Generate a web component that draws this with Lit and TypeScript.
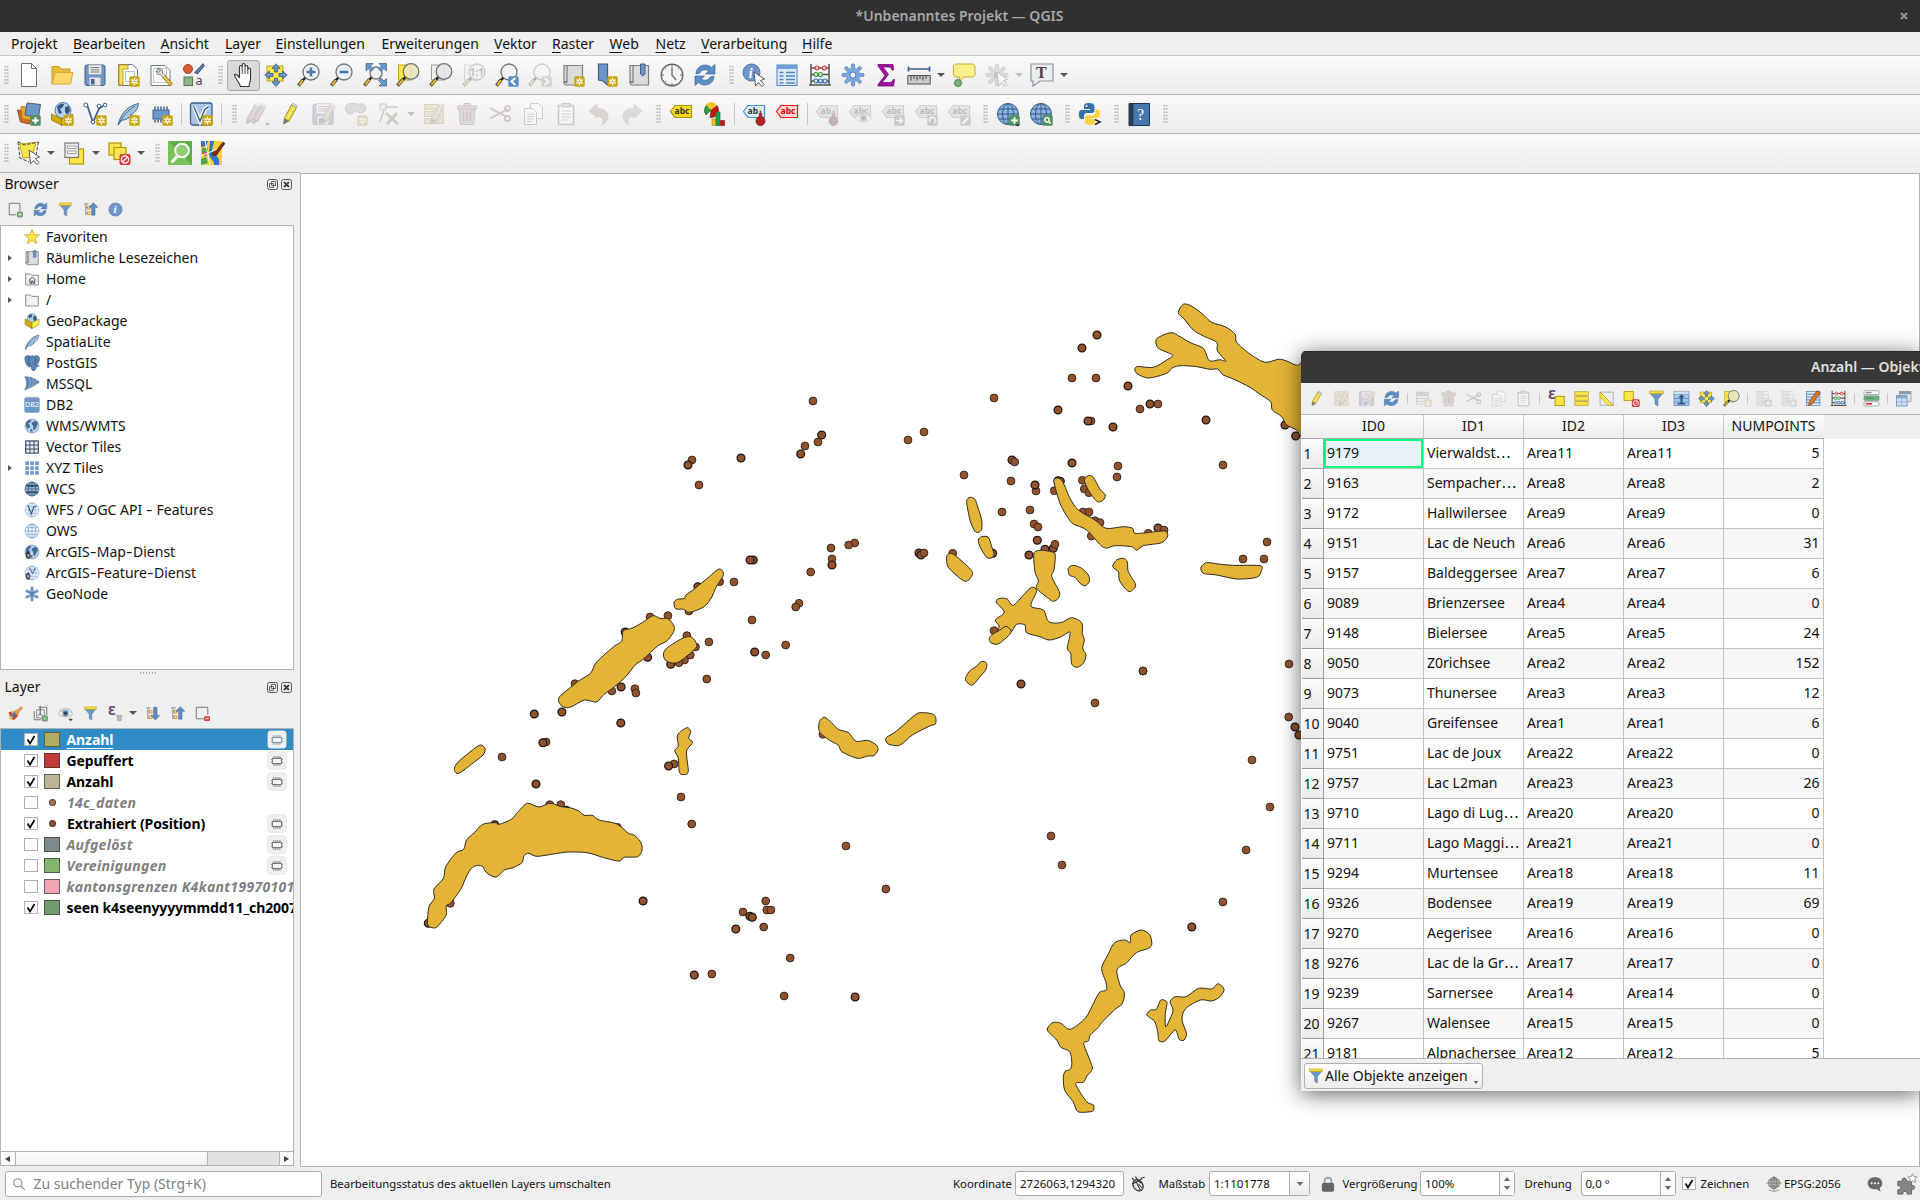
import { LitElement, html, svg, css, nothing, TemplateResult } from "lit";
import { customElement, property } from "lit/decorators.js";
import { classMap } from "lit/directives/class-map.js";

/* ---------- icon parts ---------- */

const B = "#6d97c8";
const BD = "#3f5f86";

const badge = (fill: string, inner: unknown) => svg`
  <rect x="13.3" y="13.3" width="10.4" height="10.4" rx="1.5" fill=${fill}/>${inner}`;
const star = badge("#c9a40c", svg`<path d="M18.5 14.8v7.4M15.3 16.6l6.4 3.8M21.7 16.6l-6.4 3.8" stroke="#fff" stroke-width="1.5"/><circle cx="18.5" cy="18.5" r="1" fill="#c9a40c"/>`);
const plus = badge("#4f8f5c", svg`<path d="M18.5 15.2v6.6M15.2 18.5h6.6" stroke="#fff" stroke-width="1.9"/>`);
const lens = (cx: number, cy: number, r: number, fill = "#eef2f3") => svg`
  <path d="M${cx - r * 0.7} ${cy + r * 0.7}L${cx - r * 0.7 - 3} ${cy + r * 0.7 + 3}" stroke="#222" stroke-width="2.6"/>
  <path d="M${cx - r * 0.7 - 2.5} ${cy + r * 0.7 + 2.5}L1.5 22.5" stroke="#333" stroke-width="3.4"/>
  <path d="M${cx - r * 0.7 - 2.5} ${cy + r * 0.7 + 2.5}L2.2 21.8" stroke="#f0c02c" stroke-width="2"/>
  <circle cx=${cx} cy=${cy} r=${r} fill=${fill} fill-opacity=".88" stroke="#6e7478" stroke-width="1.3"/>`;
const page = (x: number, y: number, w: number, h: number) => svg`
  <path d="M${x} ${y}h${w - 5}l5 5v${h - 5}h${-w}z" fill="#fff" stroke="#6f6f6f"/><path d="M${x + w - 5} ${y}v5h5" fill="none" stroke="#6f6f6f"/>`;
const globe = (fill: string, line: string) => svg`
  <circle cx="12" cy="12" r="10.5" fill=${fill} stroke=${line}/>
  <path d="M1.5 12h21M3.2 7h17.6M3.2 17h17.6M12 1.5v21" stroke=${line} fill="none"/>
  <ellipse cx="12" cy="12" rx="5.5" ry="10.5" fill="none" stroke=${line}/>`;
const earth = svg`
  <circle cx="12" cy="12" r="10.5" fill="#b9d0ea" stroke="#6b8fb8"/>
  <path d="M3 8c2-4 6-6 8-5l-2 4-3 1 3 3-1 4-3 1-2-4zM13 6l5-2 3 4-2 5-3 5-2-1v-5l-3-3zM9 18l3-2 1 4-3 1z" fill="#45688f"/>`;
const pencil = (c: string, dx = 0) => svg`
  <path d="M${5.5 + dx} 22l1-6L${13.5 + dx} 3l5 2.7L${11 + dx} 19z" fill=${c} stroke="#8a7a1e" stroke-width=".8"/>
  <path d="M${6.5 + dx} 16l4.5 3-5.5 3z" fill="#777"/><path d="M${13.5 + dx} 3l1.4-1.8 4.7 2.6-1.1 1.9z" fill="#ddd" stroke="#999" stroke-width=".6"/>
  <path d="M${9 + dx} 17.2L${16 + dx} 5" stroke="#fff" stroke-opacity=".5"/>`;
const labelTag = (fill: string, line: string, txt: string, color: string) => svg`
  <path d="M1.5 9.500L6 3.500h16.500v12H6z" fill=${fill} stroke=${line} stroke-width="1.2"/>
  <text x="5.600" y="12.400" font-size="8.500" font-weight="700" fill=${color} font-family="Noto Sans, sans-serif">${txt}</text>`;
const folder = svg`<path d="M2.500 4.500h7l2 2h10v14.500h-19z" fill="#f2f2f2" stroke="#7c7c7c" stroke-width="1.300"/>`;
const disk = svg`
  <rect x="2" y="2" width="20" height="20.500" rx="2" fill="${B}" stroke="#45618a"/>
  <rect x="5.500" y="2" width="13" height="9.500" fill="#eee" stroke="#999" stroke-width=".6"/>
  <path d="M7.500 4.500h9M7.500 6.800h9M7.500 9h9" stroke="#777"/>
  <rect x="6.500" y="14.500" width="11" height="8" fill="#e6e6e6"/><rect x="8" y="16" width="3.500" height="5.500" fill="#4b6384"/>`;
const funnel = svg`
  <path d="M3 4.500h18L14 13v9.500l-4-2.500V13z" fill="${B}" stroke="#4d6f99" stroke-width=".8"/>
  <rect x="2.500" y="1.500" width="19" height="3.800" fill="#f6dc3c" stroke="#b59c14" stroke-width=".8"/>`;
const refresh = svg`
  <path d="M3 11C3 5 8 2 12 2c3 0 5 1 6.500 2.500L22 1.500v9.500h-9.500l3-3C13 5.800 8.500 6.500 7 10z" fill="#5b8cc4" stroke="#416a9b" stroke-width=".7"/>
  <path d="M21 13c0 6-5 9-9 9-3 0-5-1-6.500-2.500L2 22.500V13h9.500l-3 3c2.500 2.200 7 1.500 8.500-2z" fill="#5b8cc4" stroke="#416a9b" stroke-width=".7"/>`;
const cursor = svg`<path d="M12 9l1.500 14 3-3.500 3.500 4 2-2-3.500-4 4-1.500z" fill="#fff" stroke="#555"/>`;
const box3d = svg`
  <path d="M1.500 12L12 17v6.500L1.500 18z" fill="#d6ab06" stroke="#8b7008" stroke-width=".8"/>
  <path d="M22.500 12L12 17v6.500L22.500 18z" fill="#fdf14e" stroke="#8b7008" stroke-width=".8"/>`;
const trash = svg`
  <path d="M4 7h16l-1.500 15.500h-13z" fill="#d9a9a9" stroke="#a15a5a"/><path d="M2.500 4h19v3h-19zM9 4V1.500h6V4" fill="#d9a9a9" stroke="#a15a5a"/>
  <path d="M8.500 9.500v10M12 9.500v10M15.500 9.500v10" stroke="#a15a5a" stroke-width="1.500"/>`;
const gear = (c: string, line: string) => svg`
  ${[0, 45, 90, 135].map((a) => svg`<rect x="10.400" y="1" width="3.200" height="22" rx="1" fill=${c} stroke=${line} stroke-width=".7" transform="rotate(${a} 12 12)"/>`)}
  <circle cx="12" cy="12" r="7.200" fill=${c}/><circle cx="12" cy="12" r="3" fill="#f5f5f5" stroke=${line}/>`;
const abacus = svg`
  <path d="M3 1v21M21 1v21M3 5h18M3 11.500h18M3 18h18M1 22h22" stroke="#555" stroke-width="1.500"/>
  <g stroke-width="1.200"><g fill="#f7d5d5" stroke="#d33"><circle cx="9" cy="5" r="2"/><circle cx="16.500" cy="5" r="2"/></g>
  <g fill="#d5f0d5" stroke="#3a9a48"><circle cx="8" cy="11.500" r="2"/><circle cx="12.500" cy="11.500" r="2"/></g>
  <g fill="#d5e5f5" stroke="#3c70ad"><circle cx="8" cy="18" r="2"/><circle cx="12.500" cy="18" r="2"/><circle cx="17" cy="18" r="2"/></g></g>`;
const pages2 = svg`
  <path d="M9.500 1.500h8l4 4v11h-12z" fill="#fff" stroke="#777"/><path d="M3.500 6.500h8l4 4v12h-12z" fill="#fff" stroke="#777"/>
  <path d="M6 12h7M6 14.500h7M6 17h7M6 19.500h5" stroke="#888"/>`;
const clipboard = svg`
  <path d="M4.500 3.500h15v19h-15z" fill="#fff" stroke="#777" stroke-width="1.600"/><rect x="8" y="1.500" width="8" height="3.500" fill="#bbb" stroke="#777"/>
  <path d="M7.500 9h9M7.500 12h9M7.500 15h9M7.500 18h6" stroke="#888"/>`;
const scissors = svg`
  <path d="M2 6l17 9M2 16.500L20 7" stroke="#777" stroke-width="1.800"/>
  <circle cx="19.500" cy="6.500" r="2.600" fill="none" stroke="#a66" stroke-width="1.700"/><circle cx="19.500" cy="16.500" r="2.600" fill="none" stroke="#a66" stroke-width="1.700"/>`;
const rowsYellow = (c: string) => svg`
  <g fill=${c} stroke="#b59a10"><rect x="2.500" y="2.500" width="19" height="5"/><rect x="2.500" y="9.500" width="19" height="5"/><rect x="2.500" y="16.500" width="19" height="5"/></g>`;
const panArrows = svg`
  <rect x="3" y="3" width="16" height="15" fill="#fbe64a" stroke="#c2a30f"/>
  <path d="M12 .8l4 4.600h-2.500V9h-3V5.400H8zM12 23.500l4-4.600h-2.500v-3.600h-3v3.600H8zM.8 12l4.600-4v2.500H9v3H5.400V16zM23.200 12l-4.600-4v2.500H15v3h3.600V16z" fill="${B}" stroke="#33587f" stroke-width=".8"/>`;
const treeLines = svg`<path d="M2 3h7M4.500 3v18M4.500 9h4M4.500 18h4" stroke="#777" fill="none" stroke-width="1.300"/>
  <rect x="7" y="7" width="4" height="4" fill="#fff" stroke="#e8902a" stroke-width="1.600"/><rect x="7" y="16" width="4" height="4" fill="#fff" stroke="#e8902a" stroke-width="1.600"/>`;
const feather = svg`<path d="M2 23C4 14 10 4 22.500 1.500 22 8 17 12 14 13l1.500.5C12 17 9 18 6 18z" fill="#a8c4e4" stroke="#44678f"/><path d="M2 23C6 15 12 8 19 4" stroke="#44678f" fill="none"/>`;
const noSign = svg`<rect x="12.500" y="13" width="11" height="11" rx="2" fill="#d8383e"/><circle cx="18" cy="18.500" r="3.600" fill="none" stroke="#fff" stroke-width="1.300"/><path d="M15.500 21l5-5" stroke="#fff" stroke-width="1.300"/>`;
const eye = svg`<path d="M.5 12.500c5-8 18-8 23 0-5 6-18 6-23 0z" fill="#f3f3f3" stroke="#8c8c8c"/><path d="M2 8c5-5.500 15-5.500 20 0" fill="none" stroke="#999"/><circle cx="12" cy="11.500" r="4.800" fill="#5c86b5"/><circle cx="12" cy="11.500" r="2" fill="#222"/>`;
const tableGrid = svg`
  <rect x="2" y="2" width="20" height="20.500" fill="#dcebfa" stroke="#4d7fb8"/><rect x="2" y="2" width="20" height="4" fill="#6f9fd8"/>
  <path d="M4.500 9.500h4M11 9.500h9M4.500 13h4M11 13h9M4.500 16.500h4M11 16.500h9M4.500 20h4M11 20h9" stroke="#5485bd" stroke-width="1.400"/>`;
const elephant = svg`<path d="M1.500 3c2-2.500 6-2.500 8-1 2-1 4-1 5 0 3-1.500 7-1 8.500 1.500.5 4-1 9-3.500 11v2l3-1c-.5 2-3 2.500-4.500 2-.3 3-1 6-3.500 6-3 0-3.500-3-3.500-7-1 1.500-3.500 2-5 .5C3 14.500.5 7 1.500 3z" fill="#5c86b5" stroke="#37567c"/><path d="M8 3c-1.500 4-1.500 8 1 12M16 3c2 4 2 8-1 12" stroke="#2f4c70" fill="none"/>`;
const memChip = svg`<rect x="4" y="8" width="16" height="9" fill="#6d97c8" stroke="#3f5f86"/><path d="M6 4.500v3M9 4.500v3M12 4.500v3M15 4.500v3M18 4.500v3M6 17.500v3M9 17.500v3M12 17.500v3M15 17.500v3M18 17.500v3" stroke="#3f5f86" stroke-width="1.500"/>`;
const vNodes = svg`<path d="M4.500 4L10 20.500 16 6.500 20 4" fill="none" stroke="${BD}" stroke-width="1.800"/><g fill="#fff" stroke="${BD}"><circle cx="2.800" cy="3" r="2"/><circle cx="16" cy="4" r="1.800"/><circle cx="22" cy="3" r="1.800"/><circle cx="10" cy="20" r="1.800"/></g>`;
const bookMap = svg`<path d="M3 2.500h3v17H3zM6 2.500h15.500v19.500H5c-2 0-3-3-1-3.500h2z" fill="#dcdcdc" stroke="#7d7d7d" stroke-width="1.200"/>`;
const pin = svg`<circle cx="18.500" cy="19" r="4.500" fill="#b22326" stroke="#7e1013" stroke-width=".8"/><path d="M18.500 8.500v6" stroke="#555" stroke-width="1.600"/><path d="M16.700 11h3.500v4h-3.500z" fill="#a33"/>`;

const ICONS: Record<string, TemplateResult<2>> = {
  blank: svg`${page(4.5, 0.5, 15, 23)}`,
  open: svg`<path d="M2 21V3.500h7l2 2.500h9V9" fill="#e9b93c" stroke="#cf9a20"/><path d="M2 21L5 9.500h18L20.500 21z" fill="#fbd768" stroke="#dba829"/>`,
  save: disk,
  layout: svg`<path d="M2.500 1.500h14l5 5v16h-19z" fill="#fff" stroke="#777"/><path d="M3 2h9v4H7v16H3z" fill="#f7df62" stroke="#c2a30f"/><path d="M9.500 8.500h9v10h-9z" fill="none" stroke="#a9c0da"/>${star}`,
  layoutmgr: svg`<path d="M2 2.500h14l5 5v15H2z" fill="#fff" stroke="#777"/><path d="M4.500 5.500h13v14h-13z" fill="none" stroke="#a9c8ea"/><path d="M8 5.500c3-1 6 1 5.500 4.500l3 3-2 2-3-3.500C8.500 12 6.500 10 7.500 7.500l2.500 2 1.500-1.800z" fill="#eee" stroke="#666"/><path d="M15 13.500l7.500 8.500" stroke="#8a6d12" stroke-width="3.600"/><path d="M15 13.500l7 8" stroke="#e9cb4b" stroke-width="2"/>`,
  style: svg`<circle cx="6" cy="6" r="4.500" fill="#d4602f" stroke="#a3431b"/><path d="M13 9.500l8-8.500 1 2-6.500 7.500z" fill="${B}" stroke="${BD}" stroke-width="1.200"/><rect x="2" y="14" width="8.500" height="8.500" fill="#8cb585" stroke="#4f7a4a"/><text x="13.500" y="22" font-size="12.500" fill="#444" font-family="Noto Sans, sans-serif">a</text>`,
  hand: svg`<path d="M8.500 23.500c-1-4-5.500-8-6-11.500 1-1.500 3.500 0 5 3V4c0-2 2.700-2 2.700 0V2c0-2 2.800-2 2.800 0v2c0-2 2.800-1.800 2.800 0v2.500c0-1.800 2.700-1.600 2.700 0V16c0 3-1.500 4-1.500 7.500z" fill="#fff" stroke="#333" stroke-width="1.100"/><path d="M10.200 4v7M13 4v7M15.800 6v5" stroke="#333" stroke-width=".9"/>`,
  panarrows: panArrows,
  zoomin: svg`${lens(14, 9, 8)}<path d="M14 4.500v9M9.500 9h9" stroke="#4b79b0" stroke-width="2.600"/>`,
  zoomout: svg`${lens(14, 9, 8)}<path d="M9.500 9h9" stroke="#4b79b0" stroke-width="2.600"/>`,
  zoomfull: svg`${lens(13, 10, 6)}<path d="M3 .5h7L7.500 3l3 3L8 8.500l-3-3L3 8zM23.500.5v7.500L21 5.500l-3 3L15.500 6l3-3L16 .5zM23.500 23H16l2.500-2.500-3-3L18 15l3 3 2.500-2.500z" fill="${B}" stroke="${BD}" stroke-width=".7"/>`,
  zoomsel: svg`<rect x="2.500" y="2" width="13" height="15" fill="#fbe64a" stroke="#c2a30f"/>${lens(15, 8.5, 7.8, "#e9e6c0")}`,
  zoomlayer: svg`<rect x="2.500" y="2" width="13" height="15" fill="#eee" stroke="#999"/>${lens(15, 8.5, 7.8, "#e4e7e8")}`,
  zoom11: svg`<rect x="2.500" y="2" width="13" height="15" fill="#eee" stroke="#999"/>${lens(15, 9, 8, "#e4e7e8")}<text x="7.800" y="12.500" font-size="10" font-weight="700" fill="#555" font-family="Noto Sans, sans-serif">1:1</text>`,
  zoomlast: svg`${lens(14, 9, 8)}${badge("#5b8cc4", svg`<path d="M20.500 15l-4 3.500 4 3.500" fill="none" stroke="#fff" stroke-width="2"/>`)}`,
  zoomnext: svg`${lens(14, 9, 8)}${badge("#999", svg`<path d="M16.500 15l4 3.500-4 3.500" fill="none" stroke="#fff" stroke-width="2"/>`)}`,
  newmap: svg`${bookMap}${star}`,
  newbookmark: svg`<path d="M4.500 1h9v21L9 18l-4.500 -1z" fill="${B}" stroke="${BD}" stroke-width="1.200"/>${star}`,
  bookmarks: svg`${bookMap}<path d="M13.500 1h4.500v10l-2.200 2-2.300-2z" fill="${B}" stroke="${BD}"/>`,
  clock: svg`<circle cx="12" cy="12" r="10.800" fill="#f6f6f6" stroke="#6a6a6a" stroke-width="1.400"/><path d="M12 4.500V12l4 5" fill="none" stroke="#777" stroke-width="1.500"/><path d="M12 2v2M12 20v2M2 12h2M20 12h2M5 5l1 1M19 5l-1 1M5 19l1-1" stroke="#666"/>`,
  refresh,
  identify: svg`<circle cx="9.500" cy="9.500" r="8.500" fill="${B}" stroke="#4a74a6"/><text x="6.800" y="14.500" font-size="14" font-style="italic" font-weight="700" fill="#fff" font-family="Liberation Serif, serif">i</text>${cursor}`,
  table: tableGrid,
  abacus,
  gear: gear("#7ba6dc", "#4a7ab4"),
  sigma: svg`<path d="M4 1.500h15l.5 5.500h-1.500c-.5-2-1.500-3-4-3H9l5.500 7.500L8 19.500h7.500c2 0 3-1 3.700-3h1.300L19.500 23H4v-1.500l7-9L4 3z" fill="#a50d9b" stroke="#6d0a78" stroke-width=".8"/>`,
  ruler: svg`<path d="M1.500 6h21M1.500 3.500v5M22.500 3.500v5" stroke="${BD}" stroke-width="1.700"/><rect x=".8" y="12.500" width="22.400" height="8.500" fill="#c9c9c9" stroke="#555"/><path d="M4 13v4.500M7 13v3M10 13v4.500M13 13v3M16 13v4.500M19 13v3" stroke="#444"/>`,
  balloon: svg`<path d="M5 1h15c2 0 3 1 3 3v7c0 2-1 3-3 3h-8l-5 5 1-5H5c-2 0-3.500-1-3.500-3V4c0-2 1.500-3 3.500-3z" fill="#fdf08a" stroke="#c9ac2e"/><circle cx="6" cy="20" r="3.500" fill="#7fb27c" stroke="#4e7e4b"/>`,
  playgear: svg`${gear("#a9a9a9", "#6f6f6f")}<path d="M9.500 8l6 4-6 4z" fill="#666"/>${cursor}`,
  textbubble: svg`<path d="M1 1h22v17H10l-7 5v-5H1z" fill="#e9eef2" stroke="#8a949c" stroke-width="1.200"/><text x="6" y="15" font-size="16" font-weight="700" fill="#444" font-family="Liberation Serif, serif">T</text>`,

  datasource: svg`<path d="M.5 8l13 1-1 13-9-2z" fill="#d8682d" stroke="#9b4718"/><path d="M4 4.500l14 1.500-1 13L5 17z" fill="#e8a62c" stroke="#a87617"/><path d="M10 1l13.500 1.500-2 13L8 13z" fill="${B}" stroke="${BD}"/>${plus}`,
  newgpkg: svg`<circle cx="13" cy="8.500" r="8" fill="#b9d0ea" stroke="#557ba7"/><path d="M7 5c2-3 5-4 7-3l-1 3-3 2 2 4-3 1zM15 5l4-1 1 5-3 4-2-3z" fill="#35577f"/>${box3d}${star}`,
  newshape: svg`${vNodes}${star}`,
  newspatialite: svg`${feather}${star}`,
  newmem: svg`${memChip}${star}`,
  newvirtual: svg`<rect x="1.500" y="1" width="21.500" height="22" rx="2" fill="#a9c5e6" stroke="${BD}" stroke-width="1.300"/><path d="M5 5l6 14 5-12 3.500-2" fill="none" stroke="#fff" stroke-width="4"/><path d="M5 5l6 14 5-12 3.500-2" fill="none" stroke="${BD}" stroke-width="1.500"/>${star}`,
  pencils: svg`${pencil("#c58080", -4)}${pencil("#c58080", 2)}<path d="M20 21h5l-2.500 3z" fill="#555"/>`,
  pencil: pencil("#f3dc3f"),
  saveedit: svg`${disk}${pencil("#d6a08b", 5)}`,
  blob: svg`<path d="M2 4c4-5 10-1 14-2 6-1 7 5 4 8-3 2-6 0-8-1-3 0-2 3-5 3-5 0-6-5-5-8z" fill="#a3b29e" stroke="#6f7a6c"/>${star}`,
  vertex: svg`<path d="M3 20L7 8M6 5h15" stroke="#777" stroke-width="1.500"/><rect x="3" y="2" width="6" height="6" fill="#e4e4e4" stroke="#777"/><path d="M9 11l12 11M20 11L10 22" stroke="#8d7f55" stroke-width="2.800"/>`,
  multiedit: svg`${rowsYellow("#d9c86a")}${pencil("#d9ac77", 3)}`,
  trash,
  scissors,
  copy: pages2,
  paste: clipboard,
  undo: svg`<path d="M2 9l8-7v4.500c8 0 11 4 11 8 0 4-3 7-6 8 2-3 2-8-5-8V16z" fill="#b09a80" stroke="#8a7d70" stroke-width=".7"/>`,
  redo: svg`<path d="M22 9l-8-7v4.500c-8 0-11 4-11 8 0 4 3 7 6 8-2-3-2-8 5-8V16z" fill="#a3ada3" stroke="#7e8a7e" stroke-width=".7"/>`,
  label: labelTag("#f5dc1b", "#ab930c", "abc", "#333"),
  diagram: svg`<path d="M9 8V1a7.500 7.500 0 0 0-5 12z" fill="#2ea043" stroke="#222" stroke-width=".5"/><path d="M9 8l6-4.500A7.500 7.500 0 0 1 8 15.500z" fill="#c11" stroke="#222" stroke-width=".5"/><path d="M3.500 2.500A8 8 0 0 1 14.500 2.500L9 8z" fill="#f6c51a"/><path d="M10 17h3.500v6.500H10z" fill="#f6c51a" stroke="#a87f0c" stroke-width=".6"/><path d="M14 10h4v13.500h-4z" fill="#1fa04b" stroke="#0b6b2b" stroke-width=".6"/><path d="M18.500 18.500h4v5h-4z" fill="#c3151b" stroke="#7a0b0e" stroke-width=".6"/>`,
  labelpin: svg`${labelTag("#dcecfb", "#3b8de0", "ab", "#333")}${pin}`,
  labelred: labelTag("#ffd5d5", "#f11", "abc", "#c00"),
  labeleye: svg`${labelTag("#c9c9b4", "#8a8a74", "abc", "#444")}<g transform="translate(7 8) scale(.7)">${eye}</g>`,
  labelmove: svg`${labelTag("#c9c9b4", "#8a8a74", "abc", "#444")}${badge("#777", svg`<path d="M15 18.500h6M18.500 15.500l3 3-3 3" stroke="#fff" stroke-width="1.700" fill="none"/>`)}`,
  labelrot: svg`${labelTag("#c9c9b4", "#8a8a74", "abc", "#444")}${badge("#777", svg`<path d="M16 20a3 3 0 1 1 4 1" stroke="#fff" stroke-width="1.700" fill="none"/>`)}`,
  labeledit: svg`${labelTag("#c9c9b4", "#8a8a74", "abc", "#444")}${badge("#8a8a70", svg`<path d="M15.500 21.500l6-6" stroke="#fff" stroke-width="2"/>`)}`,
  labelpindim: svg`${labelTag("#c9c9b4", "#8a8a74", "ab", "#444")}${pin}`,
  globeplus: svg`${globe("#8ab4e4", "#35587f")}${plus}<path d="M19.500 22.500h4.500l-2.200 2z" fill="#222"/>`,
  globefind: svg`${globe("#8ab4e4", "#35587f")}${badge("#4f8f5c", svg`<circle cx="18" cy="17.800" r="2.200" fill="none" stroke="#fff" stroke-width="1.400"/><path d="M19.500 19.500l2.200 2.200" stroke="#fff" stroke-width="1.500"/>`)}`,
  python: svg`<path d="M11 1c-4 0-5 1.500-5 3.500V7h6v1H3.500C1.500 8 .8 10 .8 12.500s1 4.500 2.700 4.500H6v-3c0-2 1.500-3 3-3h5c1.500 0 2.500-1 2.500-2.500v-4C16.500 2 14.500 1 11 1z" fill="#3672a8"/><circle cx="8.500" cy="4" r="1" fill="#fff"/><path d="M12 23c4 0 5-1.500 5-3.500V17h-5.500v-1H19c2 0 3-2 3-4.500S21 7.500 19.500 7.500H17.500v3c0 2-1.500 3-3 3h-5C8 13.500 7 14.500 7 16v4c0 2 2 3 5 3z" fill="#ffd040"/><path d="M17 17.500l5 2.500-5 2.500" fill="none" stroke="#222" stroke-width="1.500"/>`,
  help: svg`<path d="M2 1.500h20.500v22H2z" fill="#4677ae" stroke="#1f3550"/><path d="M2 1.500h4.500v22H2z" fill="#2a3b50"/><text x="10" y="18" font-size="16" fill="#fff" font-family="Liberation Serif, serif">?</text>`,

  select: svg`<path d="M2.500 3L19 1.500l-4 14.500L6 17z" fill="#fbe64a" stroke="#c2a30f"/><path d="M1 .8L7 4 21.500 1M1 .8L3 17l9 4M21.500 1L19 14" stroke="#444" fill="none" stroke-dasharray="3.500 1.500"/>${cursor}`,
  selform: svg`<rect x="7.500" y="8" width="14" height="15" fill="#fbe64a" stroke="#b3960d" stroke-width="1.200"/><rect x="3" y="2" width="13.500" height="14.500" fill="#e9edf0" stroke="#777" stroke-width="1.200"/><path d="M5.500 5h8.500v2.500H5.500zM5.500 10h8.500v2.500H5.500z" fill="#fff" stroke="#888" stroke-width=".8"/>`,
  deselect: svg`<rect x="2" y="2" width="12" height="12" fill="#fbe64a" stroke="#b3960d" stroke-width="1.200"/><rect x="7" y="6.500" width="12" height="12" fill="#fbe64a" stroke="#b3960d" stroke-width="1.200"/>${noSign}`,
  green: svg`<rect x="0" y="0" width="24" height="24" fill="#78c257"/><path d="M0 0h24v24z" fill="#4fa23a" opacity=".6"/><circle cx="14" cy="9.500" r="6.800" fill="#8fce74" stroke="#fff" stroke-width="2"/><path d="M9.500 15L3.500 21.500" stroke="#fff" stroke-width="3.200"/>`,
  osm: svg`<rect width="21" height="24" fill="#f5cf3f"/><path d="M0 0h7l-2 5-5 1zM13 0c0 5-4 8 0 12s6 6 5 12h-5c1-5-5-6-5-11S9 5 9 0z" fill="#2f74d0"/><path d="M1 7h6v6H1zM0 18l5-2 2 6-7 2z" fill="#4aa653"/><path d="M2 11h4v4H2z" fill="#d65a7a"/><path d="M0 15l21-9M4 0l5 24" stroke="#fff" stroke-width="1"/><path d="M11 14c0-3 2-4 4-4L22 1l2 1.500L17 12c-1 3-3 3-6 2z" fill="#7a2e14" stroke="#4c1a08" stroke-width=".6"/>`,

  addlayer: svg`<path d="M2 2h17v12M13 20.500H2V2" fill="none" stroke="#777" stroke-width="1.600"/><rect x="15" y="16" width="8" height="8" rx="1.500" fill="#8cc08f" stroke="#3f7d49" stroke-width="1.300"/><rect x="18" y="19" width="2" height="2" fill="#fff"/>`,
  funnel,
  collapse: svg`${treeLines}<path d="M16.500 1l7 7.500h-4.300V21h-5.400V8.500H9.500z" fill="#5b8cc4" stroke="${BD}" stroke-width=".8"/>`,
  expand: svg`${treeLines}<path d="M16.500 22.500l7-7.500h-4.300V2h-5.400v13H9.500z" fill="#5b8cc4" stroke="${BD}" stroke-width=".8"/>`,
  info: svg`<circle cx="12" cy="12" r="10.500" fill="${B}" stroke="#4a74a6"/><text x="8.700" y="18" font-size="18" font-style="italic" font-weight="700" fill="#fff" font-family="Liberation Serif, serif">i</text>`,
  brush: svg`<path d="M1 10l9-3 6 8-7 7-6-1z" fill="#e9b93c"/><path d="M1 10l4-1 2 3-3 5zM6 21l7-9 3 4-6 6z" fill="#d03a30"/><path d="M5 15l5-6 3 3-5 7z" fill="#3b78c4"/><path d="M11 8l4-2 6-5 2.500 2-5.500 6-2 5z" fill="#e5a04c" stroke="#b06d20" stroke-width=".7"/>`,
  addgroup: svg`<path d="M2 8v14h11M9 2h13v13" fill="none" stroke="#666" stroke-width="1.400"/><path d="M6 6h12v13H6z" fill="#f4f4f4" stroke="#666" stroke-width="1.200"/><path d="M11.500 0v14M8 16l3.500-4 3.500 4" fill="none" stroke="${BD}" stroke-width="1.600"/><rect x="15" y="16" width="8" height="8" rx="1.500" fill="#8cc08f" stroke="#3f7d49" stroke-width="1.300"/>`,
  eye: svg`${eye}<path d="M16.500 20.500h7.500l-3.700 3.800z" fill="#444"/>`,
  epsilon: svg`<text x="0" y="14" font-size="25" font-weight="600" fill="#6b3f72" font-family="Noto Sans, sans-serif">ε</text><path d="M13 15h10l-2 4v4.500h-6V19z" fill="#b5b5b5" stroke="#8f8f8f" stroke-width=".6"/>`,
  removelayer: svg`<path d="M2 2h18.500v12M14 20.500H2V2" fill="none" stroke="#777" stroke-width="1.600"/><rect x="14.500" y="16.500" width="9.500" height="7.500" rx="1.500" fill="#e23c42"/><path d="M16.500 20.200h5.500" stroke="#fff" stroke-width="1.600"/>`,

  favorite: svg`<path d="M12 .8l3 8h8.300l-6.600 5 2.400 8.400L12 17.300l-7.100 4.900 2.400-8.400-6.600-5H9z" fill="#fbe64a" stroke="#c9a21c" stroke-width="1.200"/>`,
  bookmarkfld: svg`${bookMap}<path d="M14 1h4v9l-2 2-2-2z" fill="${B}" stroke="${BD}" stroke-width=".8"/>`,
  home: svg`${folder}<path d="M7.500 14l5-5 5 5M9 13v5.500h2.500V15h2v3.500H16V13" fill="none" stroke="#333" stroke-width="1.300"/>`,
  folder,
  gpkg: svg`<circle cx="12" cy="8" r="7" fill="#b9d0ea" stroke="#557ba7"/><path d="M6.500 5c2-3 5-3 6-2l-1 3-3 2 2 4zM14 5l3-1 2 5-3 4-2-3z" fill="#35577f"/><path d="M1.500 9L12 14.500v9L1.500 17z" fill="#d6ab06" stroke="#8b7008" stroke-width=".8"/><path d="M22.500 9L12 14.500v9L22.500 17z" fill="#fdf14e" stroke="#8b7008" stroke-width=".8"/>`,
  feather,
  elephant,
  mssql: svg`<path d="M1 1c7 0 15 2 22 8-6 5-14 9-22 12 4-7 4-14 0-20z" fill="#5c86b5" stroke="#37567c" stroke-width=".7"/><path d="M7 2c3 5 3 11 0 16M12 4c3 4 3 8 0 12M17 6c2 3 2 5 0 7" stroke="#c8d8ea" fill="none" stroke-width=".8"/>`,
  db2: svg`<rect x=".5" y=".5" width="23" height="23" rx="3" fill="${B}"/><text x="1.500" y="14.500" font-size="9.500" textLength="21" lengthAdjust="spacingAndGlyphs" fill="#fff" font-family="Noto Sans, sans-serif">DB2</text>`,
  earth,
  vtiles: svg`<rect x="1.500" y="2" width="21" height="20" rx="1" fill="#49617e"/><g fill="#fff">${[3.5, 9.7, 16].map((x) => [4, 10, 16].map((y) => svg`<rect x=${x} y=${y} width="4.500" height="4.200" fill="#e8eef5"/>`))}</g>`,
  xyz: svg`<g fill="#6d9bd1">${[2, 9.3, 16.6].map((x) => [2, 9.3, 16.6].map((y) => svg`<rect x=${x} y=${y} width="5.600" height="5.600" rx=".8"/>`))}</g>`,
  wcs: svg`${globe("#9fbbdc", "#33506f")}<path d="M3 7h18M3 17h18" stroke="#33506f" stroke-width="3"/>`,
  wfs: svg`${globe("#f2f7fc", "#8fb0d6")}<path d="M6 5l5 13 4-11 4-1" fill="none" stroke="${BD}" stroke-width="1.800"/>`,
  ows: globe("#eef5fc", "#6d9bd1"),
  arcmap: svg`${earth}<path d="M2 14l5-3 3 5-2 7-5-2z" fill="#222" opacity=".75"/><path d="M5 15l3 1-2 4z" fill="#ddd"/>`,
  arcfeat: svg`${globe("#eef5fc", "#8fb0d6")}<path d="M8 4l5 9 4-9" fill="none" stroke="${BD}" stroke-width="1.500"/><path d="M2 14l5-3 3 5-2 7-5-2z" fill="#222" opacity=".75"/><path d="M5 15l3 1-2 4z" fill="#ddd"/>`,
  geonode: svg`<g stroke="${B}" stroke-width="4.500" stroke-linecap="round"><path d="M12 3v18M4.500 7.500l15 9M19.500 7.500l-15 9"/></g><circle cx="12" cy="12" r="3" fill="#5683b5"/>`,

  newcol: svg`<rect x="2" y="3" width="17" height="17" fill="#eee" stroke="#777"/><path d="M2 8h17M2 12h17M2 16h17" stroke="#777"/><path d="M2 3h17v5H2z" fill="#999"/>${star}`,
  selexpr: svg`<text x="0" y="13" font-size="23" font-weight="600" fill="#6b3f72" font-family="Noto Sans, sans-serif">ε</text><rect x="10" y="9" width="13" height="13" fill="#fbe64a" stroke="#b3960d" stroke-width="1.400"/>`,
  selall: rowsYellow("#fbe64a"),
  invert: svg`<path d="M3 3h18.500v18.500z" fill="#eee" stroke="#999"/><path d="M3 3v18.500h18.500z" fill="#eee" stroke="#999"/><path d="M3 3l18.500 18.500H14L3 10z" fill="#fbe64a" stroke="#b3960d" stroke-width=".8"/>`,
  deselect2: svg`<rect x="1.500" y="2" width="13" height="13" fill="#fbe64a" stroke="#b3960d" stroke-width="1.200"/>${noSign}`,
  movetop: svg`<path d="M1.500 2h21v20h-21z" fill="#a9c8ea" stroke="#4d7fb8"/><path d="M1.500 6.500h21M1.500 12h21M1.500 17h21" stroke="#4d7fb8"/><path d="M2 2h20v4H2z" fill="#d7dfe8"/><path d="M12 6l4.500 4.500h-3v8h4v2h-11v-2h4v-8h-3z" fill="#2f5585"/>`,
  addcol: svg`<rect x="3" y="2" width="7" height="20" fill="#ccd6c8" stroke="#888"/><rect x="12" y="2" width="7" height="20" fill="#eee" stroke="#aaa"/><path d="M3 7h16M3 12h16M3 17h16" stroke="#999"/>${badge("#9a9a9a", svg`<path d="M18.500 15.200v6.600M15.200 18.500h6.600" stroke="#fff" stroke-width="1.600"/>`)}`,
  delcol: svg`<rect x="3" y="2" width="7" height="20" fill="#eccccc" stroke="#999"/><rect x="12" y="2" width="7" height="20" fill="#eee" stroke="#aaa"/><path d="M3 7h16M3 12h16M3 17h16" stroke="#999"/>${badge("#a9a9a9", svg`<path d="M16 16l5 5M21 16l-5 5" stroke="#fff" stroke-width="1.600"/>`)}`,
  editcol: svg`<rect x="2" y="2" width="19" height="20" fill="#dcebfa" stroke="#4d7fb8"/><path d="M2 6h19M2 10h19M2 14h19M2 18h19" stroke="#4d7fb8" stroke-width="1.300"/><path d="M5 22l1.500-6L17 1l4.500 3L11 19z" fill="#e0762c" stroke="#7c3a0c"/>`,
  condfmt: svg`<rect x="1.500" y="1" width="21" height="5.500" rx="1" fill="#fff" stroke="#888"/><rect x="1.500" y="8.500" width="21" height="6" rx="1" fill="#6dbb7c" stroke="#4f8f5c"/><rect x="1.500" y="16.500" width="21" height="6" rx="1" fill="#fff" stroke="#888"/><path d="M4 3.800h8M4 11.500h12" stroke="#666" stroke-width="1.300"/><path d="M4 19.500h9" stroke="#d22" stroke-width="2"/>`,
  dock: svg`<rect x="6.500" y="2" width="16" height="14" fill="#e5ecf3" stroke="#888"/><path d="M6.500 2h16v4h-16z" fill="#8b98a5"/><rect x="2" y="8" width="15" height="14.500" fill="#cfe2f5" stroke="#4d7fb8"/><path d="M2 8h15v4H2z" fill="#8aa9c9"/><path d="M9.500 12v10M2 17h15" stroke="#7ba3d1"/>`,
  zoomer: svg`<circle cx="12" cy="12" r="9" fill="#bbb"/>`,

  memory: svg`<rect x="4" y="7.500" width="16" height="9" rx="1" fill="#f3f3f3" stroke="currentColor" stroke-width="1.800"/><path d="M6.500 3.500v3M10 3.500v3M13.500 3.500v3M17 3.500v3M6.500 17.500v3M10 17.500v3M13.500 17.500v3M17 17.500v3M2 9.500h2M2 14.500h2M20 9.500h2M20 14.500h2" stroke="currentColor" stroke-width="1.500"/>`,
  search: svg`<circle cx="10" cy="10" r="7" fill="none" stroke="#8a8a8a" stroke-width="1.800"/><path d="M15 15l7 7" stroke="#8a8a8a" stroke-width="2"/>`,
  mousepos: svg`<ellipse cx="12" cy="14" rx="7" ry="9" transform="rotate(-35 12 14)" fill="#e4e4e4" stroke="#333" stroke-width="1.900"/><path d="M3.500 12l12-6M9.500 9l6.500 13M12 7.500l5 3M3 3l5 5M8 1l4 6M16 6c1-3 3-4 6-4" stroke="#333" stroke-width="1.600"/><path d="M13 12l5 6" stroke="#333" stroke-width="1.500"/>`,
  lock: svg`<path d="M7 12V7c0-6 10-6 10 0v5" fill="none" stroke="#999" stroke-width="2.400"/><rect x="3.500" y="11" width="17" height="12" rx="1.500" fill="#666" stroke="#4c4c4c"/>`,
  crs: svg`<circle cx="12" cy="10.500" r="8.500" fill="#b9b9b9" stroke="#777"/><ellipse cx="12" cy="10.500" rx="4" ry="8.500" fill="none" stroke="#666"/><path d="M0 10.500h24M4 6h16M4 15h16M12 0v23M4 20.500c4 3 12 3 16 0" stroke="#666" fill="none"/>`,
  bubble: svg`<path d="M12 2C5 2 1 6 1 11s4 9 11 9c1 0 2 0 3-.3 2 2 4 2.800 6 3.300-1.500-1.500-2-3-2-5 2.500-1.500 4-4 4-7 0-5-4-9-11-9z" fill="#686868"/><g fill="#fff"><circle cx="7" cy="11" r="1.500"/><circle cx="12" cy="11" r="1.500"/><circle cx="17" cy="11" r="1.500"/></g>`,
  puzzle: svg`<path d="M2 9h5c-2-4 5-5.500 4.500 0H17v5c4-2 5 4.500 0 4v5h-5c1-4-5-4-4.500 0H2v-5c4 1 4-5 0-4z" fill="#868686" stroke="#5f5f5f"/><path d="M18 1l1.500 3 3.500.3-2.500 2.500.7 3.400-3.200-1.700-3 1.700.6-3.400L13 4.300l3.500-.3z" fill="#fff" stroke="#888"/>`,
};

@customElement("qg-icon")
class QgIcon extends LitElement {
  @property() name = "";
  @property({ type: Number }) size = 24;
  static styles = css`
    :host { display: inline-flex; flex: none; }
    svg { display: block; overflow: visible; }
  `;
  render() {
    return html`<svg width=${this.size} height=${this.size} viewBox="0 0 24 24" fill="none">${ICONS[this.name]}</svg>`;
  }
}

/* ---------- toolbars ----------
   "|" separator, ":" grip, "v" drop-down arrow, "~" marks a disabled entry, "!" the active one. */

@customElement("qg-toolbar")
class QgToolbar extends LitElement {
  @property() items = "";
  @property({ type: Number }) size = 24;
  static styles = css`
    :host { display: flex; align-items: center; }
    .tool { display: flex; justify-content: center; align-items: center; width: var(--cell, 33px); height: var(--tool-h, 31px); flex: none; box-sizing: border-box; }
    .off { opacity: .33; filter: grayscale(.5); }
    .on { background: #d9d9d9; border: 1px solid #a9a9a9; border-radius: 3px; margin: 0 -.500px 0 .500px; padding-left: 1px; }
    .grip { flex: none; width: 16px; display: flex; justify-content: center; padding-left: 4px; box-sizing: border-box; }
    .grip i { width: 5px; height: 20px; background-image: radial-gradient(circle, #aaa 0.8px, transparent 1px); background-size: 2.5px 3.300px; }
    .sep { flex: none; width: var(--sep, 7px); display: flex; justify-content: center; }
    .sep i { width: 1px; height: var(--sep-h, 22px); background: #c6c6c6; }
    .arrow { flex: none; width: 12px; padding-left: 1px; box-sizing: border-box; }
    .arrow i { display: block; border: 4px solid transparent; border-top: 4.500px solid #555; border-bottom: 0; width: 0; }
  `;
  render() {
    return this.items.split(" ").map((raw) => {
      const off = raw.startsWith("~");
      const on = raw.startsWith("!");
      const name = raw.replace(/^[~!]/, "");
      if (name === ":") return html`<span class="grip"><i></i></span>`;
      if (name === "|") return html`<span class="sep"><i></i></span>`;
      if (name === "v") return html`<span class=${classMap({ arrow: true, off })}><i></i></span>`;
      return html`<span class=${classMap({ tool: true, off, on })}><qg-icon name=${name} .size=${this.size}></qg-icon></span>`;
    });
  }
}

/* ---------- map ---------- */

interface Sheet { x: number; y: number; sx: number; sy: number; dots: string; lakes: string[]; }

/* Each sheet stores its features in local units; a trailing * marks stacked points. */
const SHEETS: Sheet[] = [
  {
    x: 420, y: 540, sx: 2.904, sy: 3,
    dots: "668,231 720,227 596,276* 450,431 661,352* 775,287 800,321 785,345 768,360 752,368 728,373* 839,306 833,417 557,453 584,441* 624,446 627,459 583,549* 332,522* 412,516* 366,606 357,608* 238,651 337,732* 377,794 409,794 425,811* 217,854* 573,862 88,1090 24,1150* 738,672 722,678* 758,771 789,852 648,1083* 972,336* 1004,345 1062,315 1170,583 1237,918 1353,1047 1004,1083 1007,1110 1019,1110 938,1116 958,1129* 965,1132* 998,1161 917,1167* 807,140* 781,213",
    lakes: [
      "404,472 405,490 420,502 440,500 478,480 512,486 535,463 565,440 600,407 625,375 650,356 690,318 718,302 739,266 722,237 697,235 676,227 645,248 615,265 590,272 586,303 565,318 540,340 510,370 495,400 465,420 430,448",
      "738,186 742,206 765,208 783,217 825,200 848,170 858,145 880,108 878,92 866,88 840,110 795,148 772,165 768,175 748,178",
      "707,340 712,360 733,369 755,364 800,325 801,306 785,290 760,296 720,322",
      "100,684 103,697 115,699 150,672 183,645 189,627 180,616 168,618 138,642 110,667",
      "312,790 345,801 378,790 410,800 435,803 460,812 477,826 500,826 520,840 572,852 605,880 620,884 640,905 645,930 632,950 592,952 582,963 560,960 530,952 485,938 430,936 400,940 340,949 316,940 302,947 296,968 270,983 245,990 222,1011 195,1000 180,978 160,978 145,990 130,1020 120,1045 90,1088 76,1098 76,1125 50,1160 35,1163 22,1152 26,1100 42,1075 40,1048 68,1015 75,980 105,938 127,928 135,900 158,878 182,853 218,848 230,853 265,838 285,815",
      "748,585 775,563 786,575 780,595 792,607 775,630 775,655 779,690 775,702 758,703 752,690 750,655 740,632 750,618",
      "1160,545 1175,532 1195,548 1215,568 1245,578 1266,604 1300,601 1325,615 1330,630 1318,647 1300,648 1270,655 1225,635 1215,616 1185,598 1160,575",
      "1352,600 1360,612 1385,617 1402,610 1430,585 1480,558 1497,552 1497,530 1485,521 1460,518 1440,523 1385,572 1355,592",
    ],
  },
  {
    x: 640, y: 360, sx: 3, sy: 3,
    dots: "519,123 545,225* 534,246 495,258 482,282* 156,300 144,315* 177,375 303,294* 804,240 852,216 1062,114 972,345 1116,300* 1124,306 1113,363 1086,456 573,564 576,597 576,615* 644,549 626,555 512,636 477,730 467,741 340,600* 330,600* 239,665 282,666 837,579* 843,585* 852,579 938,580 1058,580* 336,780",
    lakes: [
      "980,425 990,412 1005,418 1013,440 1025,480 1025,508 1015,517 1004,513 990,480",
      "1015,540 1025,530 1045,532 1055,560 1062,585 1050,595 1038,590 1020,560",
      "920,590 932,580 950,590 995,632 993,652 978,664 960,655 925,622",
    ],
  },
  {
    x: 1020, y: 280, sx: 3, sy: 3,
    dots: "231,165* 186,204* 156,294 228,294 324,318* 360,387 414,372 390,372* 114,390* 213,423 204,423* 279,441* 558,420* 156,549* 294,558 291,591 609,555 48,633 45,615* 30,690 42,732 54,741 52,781* 27,825* 75,808* 100,805* 105,793 103,632 114,602* 121,604* 187,601 193,627 207,638 189,696 207,696 225,722 240,728 214,768 385,760 414,744* 432,750 741,786 669,837 732,837 795,435* 827,468* 807,1152 369,1173",
    lakes: [
      "102,605 113,594 128,605 150,655 175,690 225,720 258,745 310,740 338,745 345,760 390,757 435,753 443,768 425,788 370,797 350,811 335,800 285,797 250,802 200,750 160,732 145,715 120,670",
      "193,600 205,587 220,592 240,628 256,645 250,660 235,666 222,655 205,630",
      "42,820 65,811 100,817 106,830 102,870 95,890 118,935 115,955 100,964 85,955 50,925 55,902 45,875",
      "475,98 490,73 512,77 545,100 575,127 615,140 645,162 650,187 690,222 735,247 775,238 800,243 830,256 860,256 860,470 840,466 830,450 800,435 785,410 757,390 752,365 720,343 690,322 640,297 610,285 593,267 570,268 530,260 480,257 455,265 440,280 385,294 348,278 350,260 400,262 440,240 458,225 415,205 408,180 425,167 455,158 480,170 515,190 550,205 568,242 600,239 617,243 592,212 590,187 550,168 520,150 495,120",
    ],
  },
  {
    x: 950, y: 560, sx: 3, sy: 3,
    dots: "132,212 213,372* 579,333 435,429 1016,471 1035,501* 1047,525* 906,600 960,741",
    lakes: [
      "355,25 370,16 395,25 415,45 418,65 405,77 390,70 375,52 358,45",
      "488,20 500,0 520,-5 532,5 535,35 557,75 540,95 525,85 508,60 505,35",
      "753,22 770,8 805,12 850,16 930,17 934,32 920,52 860,57 800,45 760,40",
      "138,125 150,115 172,117 190,136 225,100 245,82 260,92 243,138 280,150 296,185 332,188 365,173 395,188 397,220 403,240 398,265 408,285 400,310 380,322 365,312 362,280 352,265 360,217 330,232 297,240 270,230 230,218 225,195 200,193 180,218 145,210 148,198 136,180 160,162 160,150",
      "118,235 125,225 150,210 168,199 182,210 180,222 155,245 140,253 122,248",
      "48,350 60,332 78,320 95,304 110,310 107,330 90,350 72,372 62,375 47,362",
    ],
  },
  {
    x: 620, y: 800, sx: 2.45, sy: 3,
    dots: "417,474 182,525* 225,522 402,588 576,591* 1056,108 1083,195 1534,150 1477,306 1401,381*",
    lakes: [
      "1278,390 1298,405 1303,432 1295,445 1265,458 1240,490 1224,500 1217,515 1225,555 1236,580 1230,612 1213,628 1180,668 1172,682 1152,706 1148,722 1136,730 1146,765 1157,800 1155,812 1144,828 1135,847 1118,848 1120,862 1143,905 1160,915 1160,930 1153,935 1122,935 1110,905 1090,872 1086,835 1090,815 1103,808 1107,790 1102,755 1080,742 1070,720 1047,690 1060,668 1080,670 1103,688 1140,655 1160,610 1175,577 1192,570 1190,545 1180,505 1195,465 1212,428 1237,420 1250,428 1252,405",
      "1291,645 1300,630 1314,628 1325,600 1340,607 1336,640 1337,680 1348,655 1355,630 1348,605 1360,590 1387,590 1418,565 1450,567 1465,551 1480,568 1470,590 1450,603 1422,600 1385,627 1377,660 1388,700 1382,720 1370,718 1360,690 1335,723 1320,722 1318,700 1310,665",
    ],
  },
];

const toMap = (s: Sheet, p: string): [number, number] => {
  const [a, b] = p.replace("*", "").split(",").map(Number);
  return [s.x + a / s.sx, s.y + b / s.sy];
};

/* Closed Catmull-Rom curve through the points. */
const shoreline = (s: Sheet, line: string) => {
  const p = line.split(" ").map((t) => toMap(s, t));
  const n = p.length;
  const k = 7;
  let d = `M${p[0][0].toFixed(1)} ${p[0][1].toFixed(1)}`;
  for (let i = 0; i < n; i++) {
    const [a, b, c, e] = [p[(i - 1 + n) % n], p[i], p[(i + 1) % n], p[(i + 2) % n]];
    d += `C${[b[0] + (c[0] - a[0]) / k, b[1] + (c[1] - a[1]) / k, c[0] - (e[0] - b[0]) / k, c[1] - (e[1] - b[1]) / k, c[0], c[1]].map((v) => v.toFixed(1)).join(" ")}`;
  }
  return d + "Z";
};

@customElement("qg-map")
class QgMap extends LitElement {
  static styles = css`
    :host { display: block; overflow: hidden; background: #fff; }
    svg { display: block; }
    .lake { fill: #e3b435; stroke: #2e2a20; stroke-width: 1; }
    .dot { fill: #91522d; stroke: #3a2a20; stroke-width: 1; }
    .stack { stroke: #1f1712; stroke-width: 1.300; }
  `;
  render() {
    return html`<svg width="1618" height="992" viewBox="301 174 1618 992">
      ${SHEETS.map((s) => s.dots.split(" ").map((t) => {
        const [x, y] = toMap(s, t);
        return svg`<circle class=${classMap({ dot: true, stack: t.endsWith("*") })} cx=${x.toFixed(1)} cy=${y.toFixed(1)} r="3.900"/>`;
      }))}
      ${SHEETS.map((s) => s.lakes.map((l) => svg`<path class="lake" d=${shoreline(s, l)}/>`))}
    </svg>`;
  }
}

/* ---------- attribute table window ---------- */

const ROWS: [string, string, string, number][] = [
  ["9179", "Vierwaldst…", "Area11", 5], ["9163", "Sempacher…", "Area8", 2], ["9172", "Hallwilersee", "Area9", 0],
  ["9151", "Lac de Neuch", "Area6", 31], ["9157", "Baldeggersee", "Area7", 6], ["9089", "Brienzersee", "Area4", 0],
  ["9148", "Bielersee", "Area5", 24], ["9050", "Z0richsee", "Area2", 152], ["9073", "Thunersee", "Area3", 12],
  ["9040", "Greifensee", "Area1", 6], ["9751", "Lac de Joux", "Area22", 0], ["9757", "Lac L2man", "Area23", 26],
  ["9710", "Lago di Lug…", "Area20", 0], ["9711", "Lago Maggi…", "Area21", 0], ["9294", "Murtensee", "Area18", 11],
  ["9326", "Bodensee", "Area19", 69], ["9270", "Aegerisee", "Area16", 0], ["9276", "Lac de la Gr…", "Area17", 0],
  ["9239", "Sarnersee", "Area14", 0], ["9267", "Walensee", "Area15", 0], ["9181", "Alpnachersee", "Area12", 5],
];

@customElement("qg-attributes")
class QgAttributes extends LitElement {
  static styles = css`
    :host { display: flex; flex-direction: column; background: #efefef; border-radius: 5px 0 0 0; box-shadow: 0 3px 22px rgba(0,0,0,.62); overflow: hidden; }
    .title { height: 31.500px; flex: none; background: #373737; color: #e2e2e2; font-weight: 600; display: flex; align-items: center; padding-left: 510px; white-space: nowrap; border-top: 1px solid #2b2b2b; box-sizing: border-box; }
    qg-toolbar { height: 31px; flex: none; padding-left: 2.500px; --cell: 25px; --sep: 7.500px; --sep-h: 11px; border-bottom: 1px solid #b9b9b9; }
    .body { flex: 1; min-height: 0; overflow: hidden; background: #fff; }
    .row, .head { display: grid; grid-template-columns: 22px repeat(5, 100px); width: 522px; padding-left: .5px; }
    .headbar { background: #efefef; }
    .head { height: 23px; background: linear-gradient(#fdfdfd, #ececec); border-bottom: 1px solid #a9a9a9; }
    .head span { display: flex; align-items: center; justify-content: center; border-right: 1px solid #c8c8c8; box-sizing: border-box; padding-left: 1px; }
    .head span:first-child, .head span:last-child { border-right: 0; padding-left: 0; }
    .row { height: 30px; }
    .row > span { display: flex; align-items: center; box-sizing: border-box; border-right: 1px solid #c3c3c3; border-bottom: 1px solid #c3c3c3; padding: 0 0 1px 3.500px; white-space: nowrap; }
    .row:nth-child(even) > span { background: #f7f7f7; }
    .row > .num { background: linear-gradient(#fcfcfc, #eaeaea) !important; border-color: #9c9c9c; padding: 1px 0 0 2px; }
    .row > .right { justify-content: flex-end; padding-right: 3px; }
    .row > .current { background: #e6f1fa; box-shadow: inset 0 0 0 2px #00ff7f; }
    .dots { font-family: "DejaVu Sans", sans-serif; font-size: 15.500px; line-height: 16px; }
    .foot { flex: none; height: 32.500px; border-top: 1px solid #b5b5b5; box-sizing: border-box; padding: 3.500px 0 0 3px; }
    .btn { display: flex; align-items: center; gap: 1.500px; width: 179px; height: 26px; box-sizing: border-box; border: 1px solid #b0b0b0; border-radius: 3px; background: linear-gradient(#fff, #ededed); padding-left: 2.500px; }
    .btn i { border: 2.500px solid transparent; border-top: 3px solid #555; border-bottom: 0; margin: 14px 0 0 5px; }
  `;
  render() {
    return html`
      <div class="title">Anzahl — Objekte</div>
      <qg-toolbar .size=${17} items="pencil ~multiedit ~saveedit refresh | ~newcol ~trash ~scissors ~copy ~paste | selexpr selall invert deselect2 funnel movetop panarrows zoomsel | ~addcol ~delcol editcol abacus | condfmt | dock ~zoomer"></qg-toolbar>
      <div class="body">
        <div class="headbar"><div class="head"><span></span><span>ID0</span><span>ID1</span><span>ID2</span><span>ID3</span><span>NUMPOINTS</span></div></div>
        <div>${ROWS.map(([id, name, area, n], i) => html`<div class="row">
          <span class="num">${i + 1}</span><span class=${i ? "" : "current"}>${id}</span><span>${name.replace("…", "")}${name.endsWith("…") ? html`<span class="dots">…</span>` : nothing}</span><span>${area}</span><span>${area}</span><span class="right">${n}</span>
        </div>`)}</div>
      </div>
      <div class="foot"><div class="btn"><qg-icon name="funnel" .size=${16}></qg-icon>Alle Objekte anzeigen<i></i></div></div>`;
  }
}

/* ---------- main window ---------- */

const MENU: [string, number, number][] = [
  ["Projekt", 3, 62], ["Bearbeiten", 0, 87.5], ["Ansicht", 0, 64.5], ["Layer", 0, 50.5], ["Einstellungen", 0, 106], ["Erweiterungen", 2, 112.5],
  ["Vektor", 0, 58], ["Raster", 0, 57.5], ["Web", 0, 46], ["Netz", 0, 45.5], ["Verarbeitung", 0, 101], ["Hilfe", 0, 40],
];

const TREE: [string, string, boolean?][] = [
  ["favorite", "Favoriten"], ["bookmarkfld", "Räumliche Lesezeichen", true], ["home", "Home", true], ["folder", "/", true],
  ["gpkg", "GeoPackage"], ["feather", "SpatiaLite"], ["elephant", "PostGIS"], ["mssql", "MSSQL"], ["db2", "DB2"], ["earth", "WMS/WMTS"],
  ["vtiles", "Vector Tiles"], ["xyz", "XYZ Tiles", true], ["wcs", "WCS"], ["wfs", "WFS / OGC API - Features"], ["ows", "OWS"],
  ["arcmap", "ArcGIS-Map-Dienst"], ["arcfeat", "ArcGIS-Feature-Dienst"], ["geonode", "GeoNode"],
];

/* Hyphens are drawn a little wider than the font's own. */
const wideHyphens = (t: string) => t.split("-").map((part, i) => html`${i ? html`<span class="hy">-</span>` : nothing}${part}`);

interface Layer { name: string; color: string; on: boolean; point?: boolean; mem?: boolean; sel?: boolean; }
const LAYERS: Layer[] = [
  { name: "Anzahl", color: "#aead60", on: true, mem: true, sel: true },
  { name: "Gepuffert", color: "#c43c39", on: true, mem: true },
  { name: "Anzahl", color: "#beb297", on: true, mem: true },
  { name: "14c_daten", color: "#a57258", on: false, point: true },
  { name: "Extrahiert (Position)", color: "#91522d", on: true, point: true, mem: true },
  { name: "Aufgelöst", color: "#7d8b8f", on: false, mem: true },
  { name: "Vereinigungen", color: "#85b66f", on: false, mem: true },
  { name: "kantonsgrenzen K4kant19970101", color: "#f3a6b2", on: false },
  { name: "seen k4seenyyyymmdd11_ch2007", color: "#729b6f", on: true },
];

const check = (on: boolean) => html`<span class="check">${on ? html`<svg width="10" height="10" viewBox="0 0 10 10"><path d="M1.500 4.500L4 8.500 8.500 1" fill="none" stroke="#000" stroke-width="1.700"/></svg>` : nothing}</span>`;
const dockButtons = html`<span class="dockbtns">
  <svg width="11" height="11" viewBox="0 0 11 11"><rect x=".5" y=".5" width="10" height="10" rx="2" fill="none" stroke="#555"/><path d="M4.500 2.500h4v4h-4zM2.500 4.500h4v4h-4z" fill="#efefef" stroke="#555" stroke-width=".9"/></svg>
  <svg width="11" height="11" viewBox="0 0 11 11"><rect x=".5" y=".5" width="10" height="10" rx="2" fill="none" stroke="#555"/><path d="M3 3l5 5M8 3L3 8" stroke="#444" stroke-width="1.900"/></svg></span>`;
const spin = html`<span class="steps"><i class="up"></i><i class="down"></i></span>`;

@customElement("app-root")
class AppRoot extends LitElement {
  static styles = css`
    :host { display: flex; flex-direction: column; position: relative; width: 1920px; height: 1200px; overflow: hidden; background: #efefef; color: #111; font: 14px "Noto Sans", "Open Sans", sans-serif; line-height: 20px; }
    .titlebar { height: 32px; flex: none; background: #303030; color: #a8a8a8; display: grid; grid-template-columns: 1fr auto 1fr; align-items: center; }
    .titlebar b { font-weight: 600; padding-right: 1px; }
    .titlebar svg { justify-self: end; margin-right: 12px; }
    .menu { height: 23px; flex: none; display: flex; align-items: center; padding-left: 11px; }
    .menu span { flex: none; white-space: nowrap; box-sizing: border-box; }
    .menu u { text-underline-offset: 3px; }
    .bar { flex: none; height: 39px; box-sizing: border-box; border-top: 1px solid #c6c6c6; background: linear-gradient(#fafafa, #ececec); }
    .bar qg-toolbar { height: 100%; margin-left: -3.500px; }
    .bar + .bar { border-top-color: #b2b2b2; }
    .main { flex: 1; min-height: 0; display: flex; }
    .side { width: 294px; flex: none; display: flex; flex-direction: column; border-top: 1px solid #b2b2b2; box-sizing: border-box; }
    .main qg-map { flex: 1; border: 1px solid #b2b2b2; margin-top: 1px; height: 992px; box-sizing: content-box; }
    .splitter { width: 6px; flex: none; border-top: 1px solid #b2b2b2; }
    .docktitle { display: flex; justify-content: space-between; align-items: center; height: 22px; padding: 0 2px 0 4.500px; }
    .dockbtns { display: flex; gap: 3px; }
    .dock qg-toolbar { --cell: 25px; --tool-h: 24px; height: 28px; padding: 0 0 2px 3px; }
    .tree { height: 445px; box-sizing: border-box; border: 1px solid #b2b2b2; background: #fff; }
    .dock.b .docktitle { height: 24px; }
    .dock.b qg-toolbar { padding-bottom: 1px; }
    .node { height: 21px; display: flex; align-items: center; gap: 6.500px; padding-left: 7px; }
    .label { white-space: pre; }
    .hy { display: inline-block; transform: scaleX(1.450); margin: 0 1.250px; }
    .tw { width: 9px; }
    .tw i { display: block; width: 0; border: 3.500px solid transparent; border-left: 4.500px solid #555; border-right: 0; }
    .layers { height: 438px; box-sizing: border-box; border: 1px solid #b2b2b2; background: #fff; display: flex; flex-direction: column; }
    .list { flex: 1; overflow: hidden; }
    .layer { height: 21px; display: flex; align-items: center; padding-left: 23px; font-weight: 700; letter-spacing: -.1px; color: #000; white-space: nowrap; overflow: hidden; }
    .layer.off { color: #808080; font-style: italic; letter-spacing: .32px; }
    .layer.sel { background: #308cc6; color: #fff; }
    .layer.sel .name { text-decoration: underline; text-underline-offset: 3px; text-decoration-thickness: 1px; }
    .check { width: 13.500px; height: 13.500px; flex: none; box-sizing: border-box; border: 1px solid #b0b0b0; background: #fff; display: inline-flex; align-items: center; justify-content: center; }
    .sw { width: 16px; height: 15.500px; flex: none; margin: 0 6.500px; box-sizing: border-box; border: 1px solid rgba(40,40,40,.6); }
    .pt { width: 7px; height: 7px; border-radius: 50%; margin: 0 11.500px 0 11px; }
    .fill { flex: 1; }
    .mem { width: 18px; height: 17px; flex: none; border-radius: 3px; background: #efefef; color: #777; display: flex; align-items: center; justify-content: center; margin-right: 7px; box-shadow: 0 0 0 .5px #d8d8d8; }
    .sel .mem { color: #8097ab; }
    .scroll { height: 14px; flex: none; display: flex; border-top: 1px solid #b2b2b2; background: #e2e2e2; box-sizing: border-box; }
    .scroll .sb { width: 13.500px; background: #fbfbfb; display: flex; align-items: center; justify-content: center; }
    .scroll .thumb { width: 191px; background: linear-gradient(#fdfdfd, #f0f0f0); border: solid #b2b2b2; border-width: 0 1px; }
    .scroll .track { flex: 1; border-right: 1px solid #b2b2b2; }
    .l, .r { border: 3.500px solid transparent; }
    .l { border-right: 5px solid #444; border-left: 0; }
    .r { border-left: 5px solid #444; border-right: 0; }
    .split-h { height: 7px; display: flex; justify-content: center; align-items: center; }
    .split-h i { width: 17px; height: 2px; background-image: radial-gradient(circle, #aaa .8px, transparent 1px); background-size: 3px 2px; }
    .dock.a { height: 497px; display: flex; flex-direction: column; }
    .dock.a .tree { margin-top: auto; }
    .status { height: 34px; flex: none; display: flex; align-items: center; font-size: 11.350px; padding: 1px 0 0 4.500px; box-sizing: border-box; color: #111; }
    .status > * { flex: none; white-space: nowrap; }
    .field { box-sizing: border-box; border: 1px solid #aaa; border-radius: 3px; background: #fff; height: 25px; display: flex; align-items: center; padding-left: 4px; font-size: 11.500px; }
    .search { width: 317px; height: 26px; font-size: 14px; color: #808080; gap: 7.500px; padding-left: 6.500px; margin-right: 8.500px; }
    .msg { width: 623px; }
    .w-k { width: 62px; } .f-k { width: 109px; margin-right: 5.500px; }
    .w-m { width: 50.500px; margin-left: 13px; } .f-m { width: 101px; justify-content: space-between; padding-right: 0; }
    .f-m .dd { width: 20px; height: 23px; border-left: 1px solid #b0b0b0; background: linear-gradient(#fff, #ececec); display: flex; align-items: center; justify-content: center; box-sizing: border-box; }
    .dd i, .down { border: 3.500px solid transparent; border-top: 4.500px solid #666; border-bottom: 0; }
    .up { border: 3.500px solid transparent; border-bottom: 4.500px solid #666; border-top: 0; }
    .spin { width: 95px; justify-content: space-between; padding-right: 0; }
    .steps { width: 14px; height: 23px; border-left: 1px solid #b0b0b0; background: #fafafa; display: flex; flex-direction: column; align-items: center; justify-content: space-evenly; }
    qg-attributes { position: absolute; left: 1301px; top: 351px; width: 619px; height: 739.500px; }
    .lockic { margin: 0 7px 0 9.500px; }
    .w-v { width: 77.500px; } .w-d { width: 56px; margin-left: 9.500px; }
    .status .check { margin: 0 5px 0 6.500px; }
    .w-z { width: 65.500px; } .w-e { width: 83px; margin-left: 2px; }
    .puz { margin-left: 12.500px; }
  `;
  render() {
    return html`
      <div class="titlebar"><span></span><b>*Unbenanntes Projekt — QGIS</b>
        <svg width="8" height="8" viewBox="0 0 8 8"><path d="M1 1l6 6M7 1L1 7" stroke="#999" stroke-width="1.800"/></svg></div>
      <div class="menu">${MENU.map(([t, i, w]) => html`<span style="width:${w}px">${t.slice(0, i)}<u>${t[i]}</u>${t.slice(i + 1)}</span>`)}</div>
      <div class="bar"><qg-toolbar items=": blank open save layout layoutmgr style : !hand panarrows zoomin zoomout zoomfull zoomsel zoomlayer ~zoom11 zoomlast ~zoomnext newmap newbookmark bookmarks clock refresh : identify table abacus gear sigma ruler v balloon ~playgear ~v textbubble v"></qg-toolbar></div>
      <div class="bar"><qg-toolbar items=": datasource newgpkg newshape newspatialite newmem | newvirtual | : ~pencils pencil ~saveedit ~blob ~vertex ~v ~multiedit ~trash ~scissors ~copy ~paste ~undo ~redo : label diagram | labelpin labelred | ~labelpindim ~labeleye ~labelmove ~labelrot ~labeledit : globeplus globefind : python : help :"></qg-toolbar></div>
      <div class="bar"><qg-toolbar items=": select v selform v deselect v : green osm"></qg-toolbar></div>
      <div class="main">
        <div class="side">
          <div class="dock a">
            <div class="docktitle">Browser${dockButtons}</div>
            <qg-toolbar .size=${15} items="addlayer refresh funnel collapse info"></qg-toolbar>
            <div class="tree">${TREE.map(([ic, t, tw]) => html`<div class="node"><span class="tw">${tw ? html`<i></i>` : nothing}</span><qg-icon name=${ic} .size=${16}></qg-icon><span class="label">${wideHyphens(t)}</span></div>`)}</div>
          </div>
          <div class="split-h"><i></i></div>
          <div class="dock b">
            <div class="docktitle">Layer${dockButtons}</div>
            <qg-toolbar .size=${15} items="brush addgroup eye funnel epsilon v expand collapse removelayer"></qg-toolbar>
            <div class="layers">
              <div class="list">${LAYERS.map((l) => html`<div class=${classMap({ layer: true, off: !l.on, sel: !!l.sel })}>
                ${check(l.on)}<span class=${classMap({ sw: true, pt: !!l.point })} style="background:${l.color}"></span>
                <span class="name">${l.name}</span><span class="fill"></span>
                ${l.mem ? html`<span class="mem"><qg-icon name="memory" .size=${14}></qg-icon></span>` : nothing}</div>`)}</div>
              <div class="scroll"><span class="sb"><i class="l"></i></span><span class="thumb"></span><span class="track"></span><span class="sb"><i class="r"></i></span></div>
            </div>
          </div>
        </div>
        <div class="splitter"></div>
        <qg-map></qg-map>
      </div>
      <div class="status">
        <span class="field search"><qg-icon name="search" .size=${14}></qg-icon>Zu suchender Typ (Strg+K)</span>
        <span class="msg">Bearbeitungsstatus des aktuellen Layers umschalten</span>
        <span class="w-k">Koordinate</span><span class="field f-k">2726063,1294320</span><qg-icon name="mousepos" .size=${16}></qg-icon>
        <span class="w-m">Maßstab</span><span class="field f-m">1:1101778<span class="dd"><i></i></span></span>
        <qg-icon class="lockic" name="lock" .size=${16}></qg-icon>
        <span class="w-v">Vergrößerung</span><span class="field spin">100%${spin}</span>
        <span class="w-d">Drehung</span><span class="field spin">0,0 °${spin}</span>
        ${check(true)}<span class="w-z">Zeichnen</span><qg-icon name="crs" .size=${16}></qg-icon><span class="w-e">EPSG:2056</span>
        <qg-icon name="bubble" .size=${16}></qg-icon><qg-icon class="puz" name="puzzle" .size=${22}></qg-icon>
      </div>
      <qg-attributes></qg-attributes>`;
  }
}
